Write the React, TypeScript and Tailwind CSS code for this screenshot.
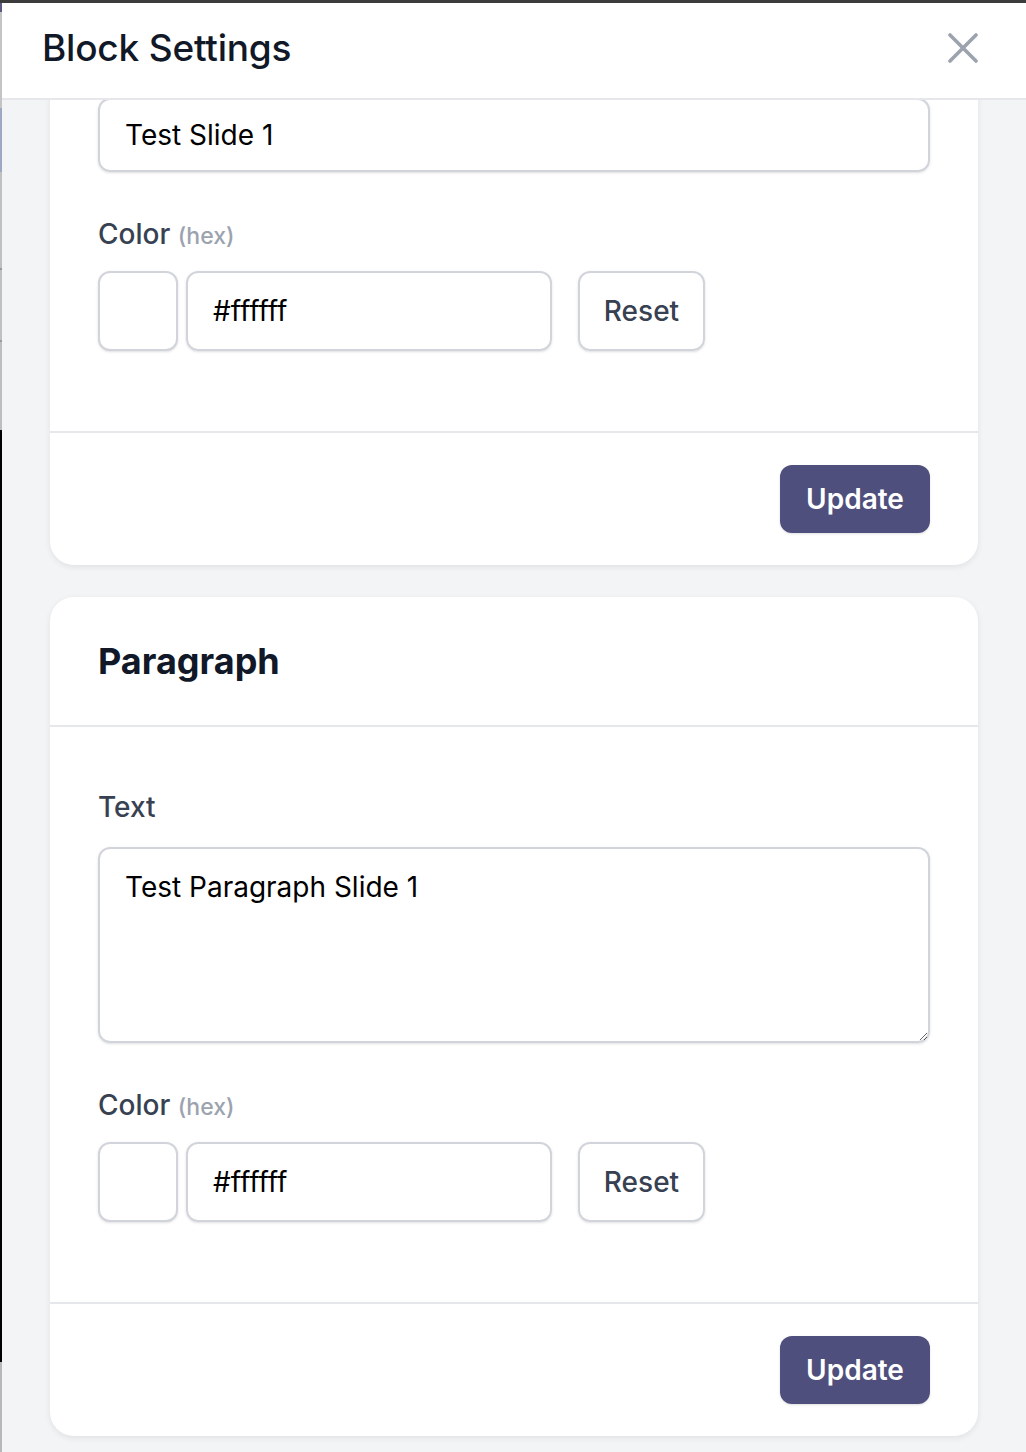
import { useState } from "react";

type Field = { label: string; kind: "input" | "textarea"; value: string };

type Block = {
  id: string;
  title: string;
  field: Field;
  color: string;
};

const BLOCKS: Block[] = [
  { id: "heading", title: "Heading", field: { label: "Text", kind: "input", value: "Test Slide 1" }, color: "#ffffff" },
  { id: "paragraph", title: "Paragraph", field: { label: "Text", kind: "textarea", value: "Test Paragraph Slide 1" }, color: "#ffffff" },
];

function CloseIcon() {
  return (
    <svg width="30" height="30" viewBox="0 0 30 30" fill="none" stroke="#9ca3af" strokeWidth="3.6" strokeLinecap="round">
      <path d="M2 2L28 28M28 2L2 28" />
    </svg>
  );
}

function BlockCard({ block }: { block: Block }) {
  const [text, setText] = useState(block.field.value);
  const [color, setColor] = useState(block.color);

  return (
    <section className="bg-white rounded-[24px] shadow-[0_2px_6px_rgba(0,0,0,0.08)]">
      <div className="px-12 py-[46px] border-b-2 border-[#e5e7eb]">
        <h2 className="text-[36px] leading-[36px] font-bold text-[#111827]">{block.title}</h2>
      </div>

      <div className="px-12 pt-[60px] pb-[80px]">
        <label className="block text-[28px] leading-[40px] font-medium text-[#374151]">{block.field.label}</label>
        {block.field.kind === "input" ? (
          <input value={text} onChange={(e) => setText(e.target.value)}
            className="mt-5 block w-full h-[74px] border-2 border-[#d1d5db] rounded-[12px] px-[25px] text-[28px] text-black shadow-sm outline-none" />
        ) : (
          <textarea value={text} onChange={(e) => setText(e.target.value)}
            className="mt-5 block w-full h-[196px] border-2 border-[#d1d5db] rounded-[12px] px-[25px] pt-[18px] pb-[10px] text-[28px] leading-[40px] text-black shadow-sm outline-none" />
        )}

        <div className="mt-[42px] text-[28px] leading-[40px] font-medium text-[#374151]">
          Color <span className="text-[23px] text-[#9ca3af]">(hex)</span>
        </div>
        <div className="mt-[15px] flex items-center">
          <div className="w-[80px] h-[80px] border-2 border-[#d1d5db] rounded-[12px] shadow-sm" style={{ backgroundColor: color }} />
          <input value={color} onChange={(e) => setColor(e.target.value)}
            className="ml-[8px] w-[366px] h-[80px] border-2 border-[#d1d5db] rounded-[12px] px-[25px] text-[28px] text-black shadow-sm outline-none" />
          <button onClick={() => setColor("#ffffff")}
            className="ml-[26px] w-[127px] h-[80px] border-2 border-[#d1d5db] rounded-[12px] text-[28px] font-medium text-[#374151] shadow-sm">
            Reset
          </button>
        </div>
      </div>

      <div className="px-12 py-8 border-t-2 border-[#e5e7eb] flex justify-end">
        <button className="w-[150px] h-[68px] rounded-[12px] bg-[#4f4f7d] text-white text-[28px] font-semibold shadow-sm">
          Update
        </button>
      </div>
    </section>
  );
}

export default function App() {
  return (
    <div className="w-[1026px] h-[1452px] flex flex-col overflow-hidden bg-[#f3f4f6] font-['Inter',sans-serif]">
      <div className="h-[3px] bg-[#3c3c3c] shrink-0" />
      <div className="flex flex-1 min-h-0">
        {/* edge of the window behind */}
        <div className="w-[2px] flex flex-col shrink-0">
          <div className="h-[9px] bg-[#5b5a86]" />
          <div className="h-[96px] bg-[#c4c4c4]" />
          <div className="h-[64px] bg-[#9fa8c2]" />
          <div className="h-[96px] bg-[#c0c0c0]" />
          <div className="h-[2px] bg-[#9a9a9a]" />
          <div className="h-[70px] bg-[#c0c0c0]" />
          <div className="h-[2px] bg-[#9a9a9a]" />
          <div className="h-[88px] bg-[#bdbdbd]" />
          <div className="h-[932px] bg-black" />
          <div className="flex-1 bg-[#b8b8b8]" />
        </div>

        <div className="flex-1 min-w-0 flex flex-col">
          <header className="h-[97px] shrink-0 bg-white border-b-2 border-[#e5e7eb] flex items-center justify-between pl-[40px] pr-[48px] pb-[5px]">
            <h1 className="text-[37px] font-medium text-[#111827] tracking-[-0.2px]">Block Settings</h1>
            <button title="Close"><CloseIcon /></button>
          </header>

          <div className="flex-1 min-h-0 overflow-hidden px-12">
            <div className="-mt-[252px] flex flex-col gap-8">
              {BLOCKS.map((b) => <BlockCard key={b.id} block={b} />)}
            </div>
          </div>
        </div>
      </div>
    </div>
  );
}
